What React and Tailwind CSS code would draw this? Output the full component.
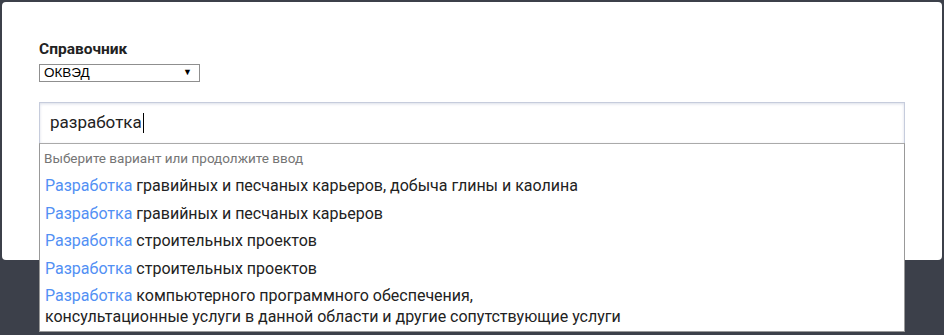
const items = [
  ['гравийных и песчаных карьеров, добыча глины и каолина'],
  ['гравийных и песчаных карьеров'],
  ['строительных проектов'],
  ['строительных проектов'],
  ['компьютерного программного обеспечения,', 'консультационные услуги в данной области и другие сопутствующие услуги'],
]

export default function App() {
  return (
    <div className="w-[944px] h-[335px] bg-[#3c404a] overflow-hidden font-['Roboto',sans-serif]">
      <div className="relative ml-[2px] mt-[2px] w-[940px] h-[258px] bg-white rounded-[4px] pl-[37px] pt-[38px]">
        <div className="text-[15.5px] font-bold text-[#222] leading-[18px]">Справочник</div>
        <div className="mt-[6px] w-[161px] h-[18px] border border-[#8f8f8f] flex items-center justify-between pl-[4px] pr-[7px] font-['Liberation_Sans',sans-serif] text-[13.5px] text-black">
          <span>ОКВЭД</span>
          <span className="text-[9px]">▼</span>
        </div>
        <div className="relative mt-[20px] w-[866px]">
          <div className="h-[42px] border border-[#c6ccdc] shadow-[inset_0_1px_3px_rgba(150,160,190,0.35)] flex items-center pl-[10px] text-[17px] text-[#222]">
            <span>разработка</span>
            <span className="ml-[1px] w-[1px] h-[20px] bg-black"></span>
          </div>
          <div className="absolute left-0 top-[41px] w-[866px] bg-white border border-[#999] border-t-[#aaa]">
            <div className="h-[28px] flex items-center pl-[4px] text-[13.5px] text-[#757575]">Выберите вариант или продолжите ввод</div>
            {items.map((lines, i) => (
              <div key={i} className="pl-[5px] py-[3.25px] text-[16px] leading-[21px] text-[#222]">
                <span className="text-[#5290f4]">Разработка</span> {lines[0]}
                {lines[1] && <><br />{lines[1]}</>}
              </div>
            ))}
          </div>
        </div>
      </div>
    </div>
  )
}
